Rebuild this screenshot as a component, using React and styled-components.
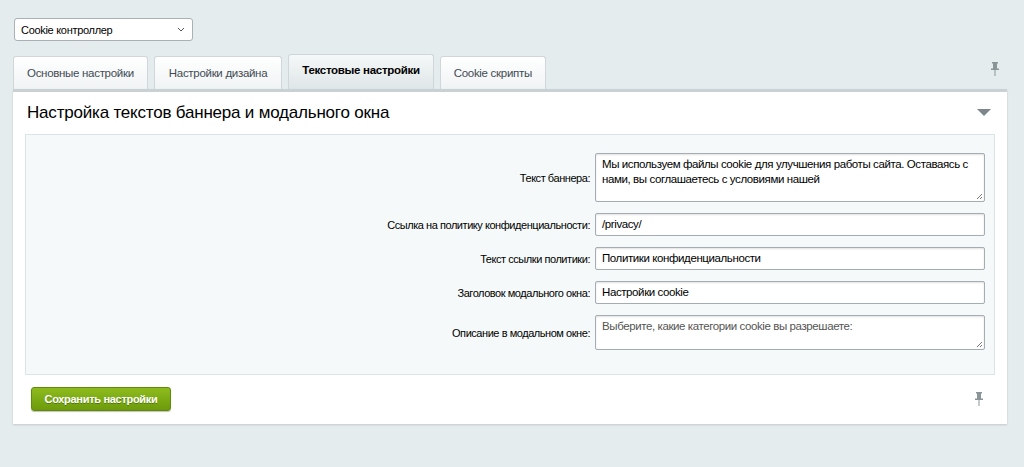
import React from "react";
import styled, { createGlobalStyle } from "styled-components";

const Global = createGlobalStyle`
  html, body { margin: 0; padding: 0; background: #e5ecee; font-family: "Liberation Sans", Arial, sans-serif; }
`;

const Page = styled.div`
  padding: 18px 17px 0 13px;
  height: 467px;
  box-sizing: border-box;
`;

const Select = styled.div`
  margin-left: 1px;
  width: 179px;
  height: 23px;
  box-sizing: border-box;
  background: #fff;
  border: 1px solid #a9b1b4;
  border-radius: 3px;
  display: flex;
  align-items: center;
  justify-content: space-between;
  padding: 0 7px 0 6px;
  font-size: 11px;
  letter-spacing: -0.3px;
  color: #000;
`;

const TabBar = styled.div`
  display: flex;
  align-items: flex-end;
  gap: 6px;
  margin-top: 13px;
  height: 35px;
  position: relative;
`;

const Tab = styled.div`
  height: ${p => (p.$active ? 35 : 33)}px;
  box-sizing: border-box;
  padding: 0 ${p => p.$pad}px;
  display: flex;
  align-items: center;
  font-size: 11.5px;
  letter-spacing: -0.3px;
  font-weight: ${p => (p.$active ? "bold" : "normal")};
  color: ${p => (p.$active ? "#000" : "#3f4b54")};
  background: ${p => (p.$active ? "linear-gradient(#f5f8f8,#dfe6e8)" : "linear-gradient(#ffffff,#f0f3f4)")};
  border: 1px solid #cfd7da;
  border-bottom: none;
  border-radius: 3px 3px 0 0;
  padding-bottom: ${p => (p.$active ? 4 : 0)}px;
`;

const Pin = styled.div`
  position: absolute;
  right: 8px;
  top: ${p => p.$top}px;
`;

const Panel = styled.div`
  background: #fff;
  border-top: 3px solid #c9d1d4;
  box-shadow: 0 1px 2px rgba(0,0,0,0.15);
  padding: 0 12px 13px 12px;
  position: relative;
`;

const Title = styled.div`
  display: flex;
  justify-content: space-between;
  align-items: center;
  height: 42px;
  padding-left: 2px;
  font-size: 17px;
  letter-spacing: -0.2px;
  color: #000;
`;

const Inner = styled.div`
  background: #f5f9f9;
  border: 1px solid #dbe5e8;
  padding: 18px 9px 24px 0;
  display: grid;
  grid-template-columns: 564px 1fr;
  column-gap: 5px;
  row-gap: 11px;
  align-items: center;
`;

const Label = styled.label`
  text-align: right;
  font-size: 11px;
  letter-spacing: -0.45px;
  color: #000;
`;

const Field = styled.div`
  height: ${p => p.$h}px;
  box-sizing: border-box;
  background: #fff;
  border: 1px solid #a4adb1;
  border-radius: 2px;
  box-shadow: inset 0 1px 2px rgba(0,0,0,0.12);
  padding: ${p => (p.$area ? "3px 6px" : "0 6px")};
  display: flex;
  align-items: ${p => (p.$area ? "flex-start" : "center")};
  font-size: 11.5px;
  letter-spacing: -0.4px;
  line-height: 15px;
  color: ${p => p.$muted ? "#555" : "#000"};
  position: relative;
`;

const Grip = styled.svg`
  position: absolute;
  right: 1px;
  bottom: 1px;
`;

const Footer = styled.div`
  display: flex;
  justify-content: space-between;
  align-items: center;
  padding: 12px 12px 0 6px;
`;

const Button = styled.div`
  width: 140px;
  height: 24px;
  box-sizing: border-box;
  border-radius: 3px;
  background: linear-gradient(#8dbb1e, #6c9a0b);
  border: 1px solid #5f8a0a;
  box-shadow: 0 1px 1px rgba(0,0,0,0.25);
  color: #fff;
  font-weight: bold;
  font-size: 11px;
  letter-spacing: -0.3px;
  display: flex;
  align-items: center;
  justify-content: center;
  text-shadow: 0 1px 0 rgba(0,0,0,0.3);
`;

const PinIcon = () => (
  <svg width="8" height="14" viewBox="0 0 8 14">
    <rect x="1" y="0" width="6" height="1.5" fill="#8a9598" />
    <rect x="2" y="1" width="4" height="6" fill="#8a9598" />
    <rect x="0" y="6.5" width="8" height="1.5" fill="#8a9598" />
    <rect x="3.5" y="8" width="1" height="6" fill="#8a9598" />
  </svg>
);

const GripIcon = () => (
  <Grip width="7" height="7" viewBox="0 0 7 7">
    <path d="M6 1L1 6M6 4L4 6" stroke="#777" strokeWidth="1" />
  </Grip>
);

const rows = [
  { label: "Текст баннера:", value: "Мы используем файлы cookie для улучшения работы сайта. Оставаясь с нами, вы соглашаетесь с условиями нашей", h: 49, area: true },
  { label: "Ссылка на политику конфиденциальности:", value: "/privacy/", h: 23 },
  { label: "Текст ссылки политики:", value: "Политики конфиденциальности", h: 23 },
  { label: "Заголовок модального окна:", value: "Настройки cookie", h: 23 },
  { label: "Описание в модальном окне:", value: "Выберите, какие категории cookie вы разрешаете:", h: 35, area: true, muted: true },
];

export default function App() {
  return (
    <>
      <Global />
      <Page>
        <Select>
          <span>Cookie контроллер</span>
          <svg width="8" height="5" viewBox="0 0 8 5"><path d="M1 1l3 3 3-3" stroke="#555" fill="none" /></svg>
        </Select>
        <TabBar>
          <Tab $pad={13}>Основные настройки</Tab>
          <Tab $pad={14}>Настройки дизайна</Tab>
          <Tab $pad={13} $active>Текстовые настройки</Tab>
          <Tab $pad={13}>Cookie скрипты</Tab>
          <Pin $top={8}><PinIcon /></Pin>
        </TabBar>
        <Panel>
          <Title>
            <span>Настройка текстов баннера и модального окна</span>
            <svg width="14" height="8" viewBox="0 0 14 8" style={{ marginRight: 4 }}><path d="M0 0h14L7 7z" fill="#7d878b" /></svg>
          </Title>
          <Inner>
            {rows.map(r => (
              <React.Fragment key={r.label}>
                <Label>{r.label}</Label>
                <Field $h={r.h} $area={r.area} $muted={r.muted}>
                  {r.value}
                  {r.area && <GripIcon />}
                </Field>
              </React.Fragment>
            ))}
          </Inner>
          <Footer>
            <Button>Сохранить настройки</Button>
            <PinIcon />
          </Footer>
        </Panel>
      </Page>
    </>
  );
}
